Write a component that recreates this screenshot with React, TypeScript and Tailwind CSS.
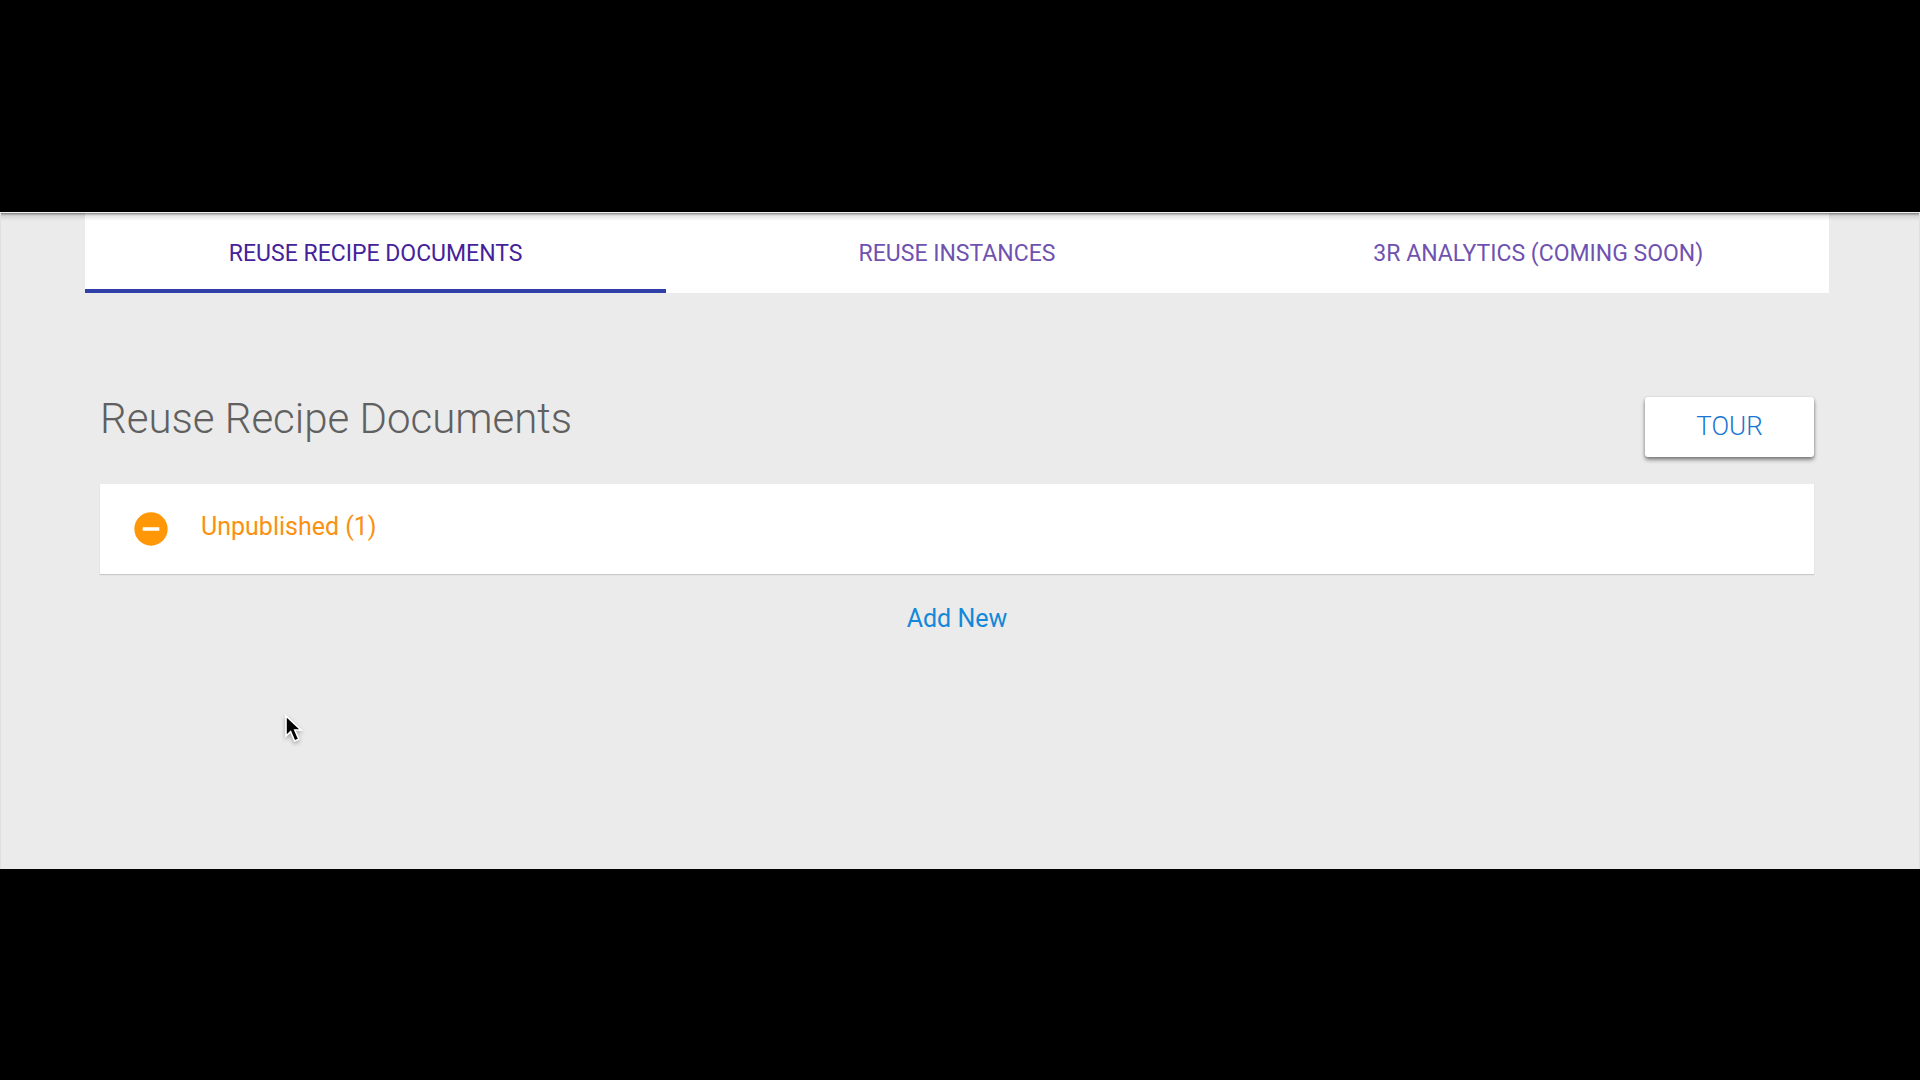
const tabs = [
  { label: 'REUSE RECIPE DOCUMENTS', active: true },
  { label: 'REUSE INSTANCES', active: false },
  { label: '3R ANALYTICS (COMING SOON)', active: false },
];

function TabBar() {
  return (
    <div role="tablist" className="grid grid-cols-3 bg-white">
      {tabs.map((tab) => (
        <button
          key={tab.label}
          type="button"
          role="tab"
          aria-selected={tab.active}
          className={
            tab.active
              ? 'h-[81px] border-b-4 border-[#303fa8] pt-2 text-[23px] text-[#45229a]'
              : 'h-[81px] border-b-4 border-transparent pt-2 text-[23px] text-[#6f52b0]'
          }
        >
          {tab.label}
        </button>
      ))}
    </div>
  );
}

function MinusCircle() {
  return (
    <svg viewBox="0 0 24 24" className="size-10 shrink-0 fill-[#ff9706]" aria-hidden="true">
      <path d="M12 2C6.48 2 2 6.48 2 12s4.48 10 10 10 10-4.48 10-10S17.52 2 12 2zm5 11H7v-2h10v2z" />
    </svg>
  );
}

function Cursor() {
  return (
    <svg
      viewBox="0 0 20 30"
      className="absolute top-[502px] left-[283px] h-[30px] w-5 overflow-visible drop-shadow-[0_2px_2px_rgba(0,0,0,0.3)]"
      aria-hidden="true"
    >
      <path
        d="M2 2v20l4.6-4.3 4 9.3 4.2-1.8-4-9.2H17z"
        fill="#000"
        stroke="#fff"
        strokeWidth="1.6"
      />
    </svg>
  );
}

export default function App() {
  return (
    <div className="flex min-h-screen flex-col justify-center bg-black font-['Roboto',sans-serif]">
      <div className="relative border-x border-[#e0e0e0] bg-[#ebebeb] pr-[90px] pb-[230px] pl-[84px]">
        <div className="absolute inset-x-0 top-0 h-px bg-[#ededed]" />
        <div className="absolute inset-x-0 top-px h-2 bg-linear-to-b from-black/45 via-black/10 via-35% to-transparent" />
        <TabBar />
        <main className="px-[15px] pt-[104px]">
          <div className="flex items-start justify-between">
            <h1 className="text-[42px] leading-[44px] font-light text-[#606060]">
              Reuse Recipe Documents
            </h1>
            <button
              type="button"
              className="h-[60px] w-[169px] rounded-[3px] bg-white text-[26px] font-light text-[#1976d2] shadow-[0_3px_4px_rgba(0,0,0,0.4),0_1px_3px_rgba(0,0,0,0.2)]"
            >
              TOUR
            </button>
          </div>
          <button
            type="button"
            aria-expanded="false"
            className="mt-[27px] flex h-[90px] w-full items-center gap-[30px] bg-white px-[31px] text-[25px] text-[#fa9110] shadow-[0_1px_1px_rgba(0,0,0,0.15)]"
          >
            <MinusCircle />
            <span className="pb-1">Unpublished (1)</span>
          </button>
          <div className="mt-[25px] text-center text-[25px] leading-[40px]">
            <a href="#new" className="text-[#1488d8]">
              Add New
            </a>
          </div>
        </main>
        <Cursor />
      </div>
    </div>
  );
}
